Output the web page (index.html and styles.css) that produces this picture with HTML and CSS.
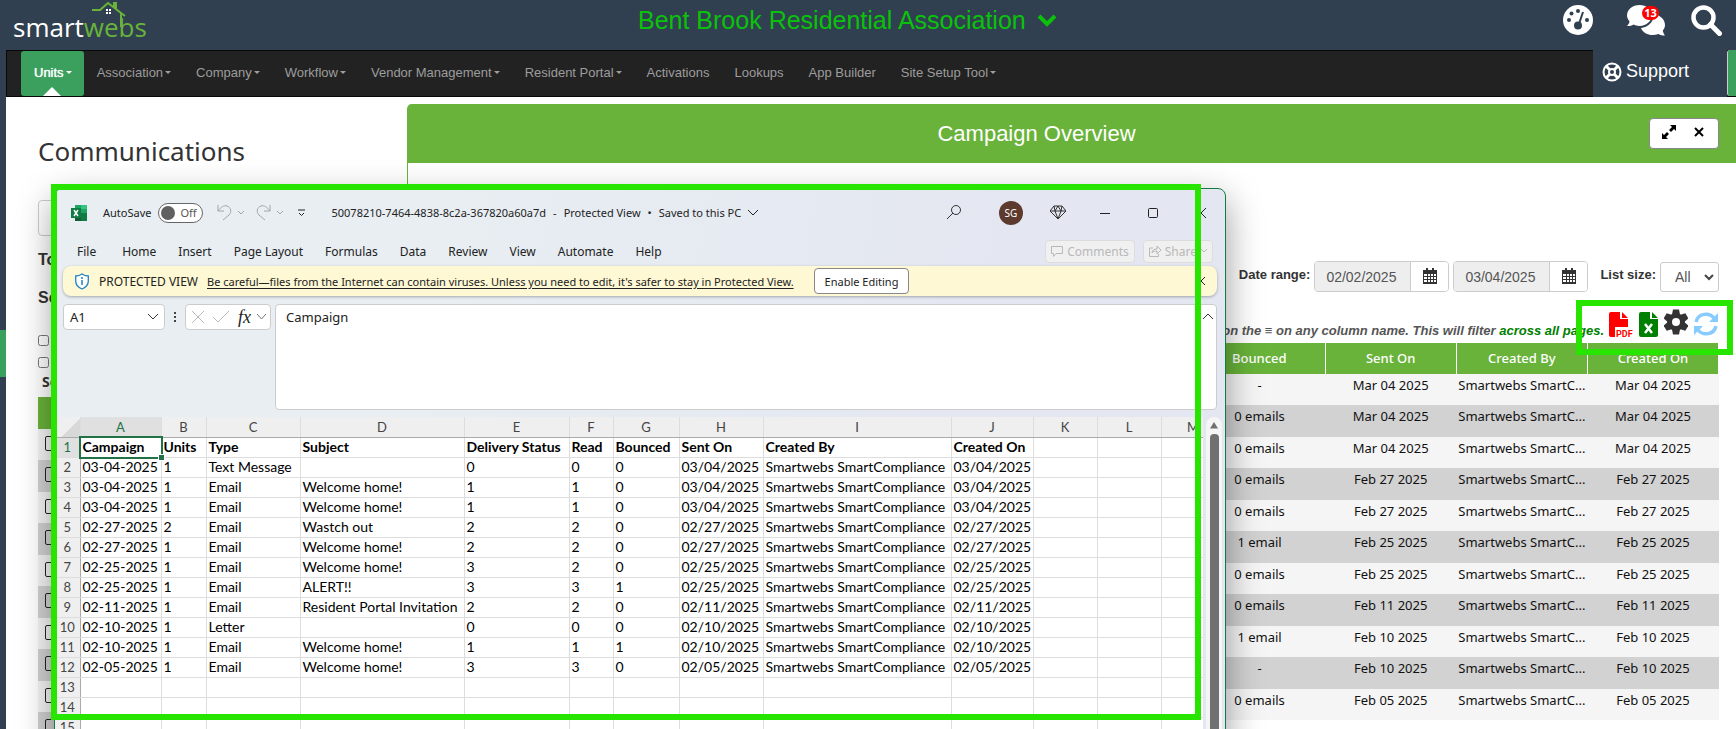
FILE: index.html
```html
<!DOCTYPE html>
<html lang="en">
<head>
  <meta charset="UTF-8">
  <meta name="viewport" content="width=device-width, initial-scale=1.0">
  <title>Communications - Smartwebs</title>
  <link rel="stylesheet" href="styles.css">
</head>
<body>
  <header class="topbar">
    <a href="#" class="logo">smart<span>webs</span>
      <svg class="logo-roof" width="36" height="28" viewBox="0 0 36 28"><path d="M0 9h8l8-7 17 13M29 12v14" fill="none" stroke="#69b33a" stroke-width="2"/><path d="M21 1h4v8l-4-3z" fill="#69b33a"/><path d="M14 8h2v2h-2zM17 8h2v2h-2zM14 11h2v2h-2zM17 11h2v2h-2z" fill="#fff"/></svg>
    </a>
    <button class="assoc">Bent Brook Residential Association
      <svg width="20" height="14" viewBox="0 0 20 14"><path d="M2 2l8 8 8-8" fill="none" stroke="#0bc20b" stroke-width="4"/></svg>
    </button>
    <div class="top-icons">
      <a href="#" aria-label="Dashboard"><svg width="30" height="30" viewBox="0 0 30 30"><circle cx="15" cy="15" r="15" fill="#fff"/><g fill="#304050"><circle cx="15" cy="6" r="2"/><circle cx="8.500" cy="8.500" r="2"/><circle cx="6" cy="15" r="2"/><circle cx="24" cy="15" r="2"/><circle cx="15" cy="20.500" r="4"/></g><path d="M16 19l4-12" stroke="#304050" stroke-width="2"/></svg></a>
      <a href="#" class="chat" aria-label="Messages"><svg width="38" height="31" viewBox="0 0 38 31"><path d="M12.500 0C19.500 0 25 4.400 25 10s-5.500 11-12.500 11c-2.500 0-4.500-.6-6-1.400C4.500 21 2 21.200 0 21c1.500-1.500 2.300-3 2.500-4.700C1 14.500 0 12.500 0 10.500 0 4.500 5.500 0 12.500 0z" fill="#fff"/><path d="M26.500 9C33 10 38 14.500 38 20c0 2-.8 4-2.200 5.400.3 2 1.200 3.600 2.200 5.100-2.500 0-4.600-.4-6.500-1.500-7 2.500-15 .5-17.500-6C21 22 27 17.500 26.500 9z" fill="#fff"/></svg><span class="badge">13</span></a>
      <a href="#" aria-label="Search"><svg width="31" height="31" viewBox="0 0 31 31"><circle cx="12.500" cy="12.500" r="10" fill="none" stroke="#fff" stroke-width="4.500"/><path d="M19.500 19.500l9 9" stroke="#fff" stroke-width="5" stroke-linecap="round"/></svg></a>
    </div>
  </header>

  <div class="shell">
    <div class="rail"><div class="rail-mark"></div></div>
    <div class="page">
      <nav class="navbar">
        <a href="#" class="active caret">Units</a>
        <a href="#" class="caret">Association</a>
        <a href="#" class="caret">Company</a>
        <a href="#" class="caret">Workflow</a>
        <a href="#" class="caret">Vendor Management</a>
        <a href="#" class="caret">Resident Portal</a>
        <a href="#">Activations</a>
        <a href="#">Lookups</a>
        <a href="#">App Builder</a>
        <a href="#" class="caret">Site Setup Tool</a>
        <a href="#" class="support"><svg width="20" height="20" viewBox="0 0 20 20" fill="none" stroke="#fff"><circle cx="10" cy="10" r="8.500" stroke-width="2"/><circle cx="10" cy="10" r="3" stroke-width="2"/><path d="M4 4l3.500 3.500M16 4l-3.500 3.500M4 16l3.500-3.500M16 16l-3.500-3.500" stroke-width="3"/></svg>Support</a>
        <span class="nav-end"></span>
      </nav>

      <div class="columns">
        <aside class="side">
          <h1>Communications</h1>
          <input type="text" class="side-search" aria-label="Search communications">
          <h2>To</h2>
          <h2>Se</h2>
          <input type="checkbox" class="tick" aria-label="First option">
          <input type="checkbox" class="tick" aria-label="Second option">
          <h3>Se</h3>
          <div class="side-list">
            <div class="side-head"></div>
            <div class="side-row"><input type="checkbox" aria-label="Row 1"></div>
            <div class="side-row"><input type="checkbox" aria-label="Row 2"></div>
            <div class="side-row"><input type="checkbox" aria-label="Row 3"></div>
            <div class="side-row"><input type="checkbox" aria-label="Row 4"></div>
            <div class="side-row"><input type="checkbox" aria-label="Row 5"></div>
            <div class="side-row"><input type="checkbox" aria-label="Row 6"></div>
            <div class="side-row"><input type="checkbox" aria-label="Row 7"></div>
            <div class="side-row"><input type="checkbox" aria-label="Row 8"></div>
            <div class="side-row"><input type="checkbox" aria-label="Row 9"></div>
            <div class="side-row"><input type="checkbox" aria-label="Row 10"></div>
          </div>
        </aside>

        <main class="panel">
          <div class="panel-head">
            <h2>Campaign Overview</h2>
            <div class="panel-tools">
              <button aria-label="Expand"><svg width="14" height="14" viewBox="0 0 14 14"><path d="M8 0h6v6l-2-2-3 3-2-2 3-3zM6 14H0V8l2 2 3-3 2 2-3 3z"/></svg></button>
              <button aria-label="Close"><svg width="10" height="10" viewBox="0 0 10 10"><path d="M1 1l8 8M9 1l-8 8" stroke="#000" stroke-width="2"/></svg></button>
            </div>
          </div>

          <div class="filters">
            <label for="from">Date range:</label>
            <div class="date"><input id="from" type="text" value="02/02/2025"><button aria-label="Pick start date"><svg width="14" height="16" viewBox="0 0 14 16"><path d="M0 2h14v14H0z" fill="#333"/><path d="M3 0h2v4H3zM9 0h2v4H9z" fill="#333"/><path d="M1 6h3v2H1zM5 6h2v2H5zM8 6h2v2H8zM11 6h2v2h-2zM1 9h3v2H1zM5 9h2v2H5zM8 9h2v2H8zM11 9h2v2h-2zM1 12h3v2H1zM5 12h2v2H5zM8 12h2v2H8zM11 12h2v2h-2z" fill="#fff"/></svg></button></div>
            <div class="date"><input type="text" value="03/04/2025" aria-label="End date"><button aria-label="Pick end date"><svg width="14" height="16" viewBox="0 0 14 16"><path d="M0 2h14v14H0z" fill="#333"/><path d="M3 0h2v4H3zM9 0h2v4H9z" fill="#333"/><path d="M1 6h3v2H1zM5 6h2v2H5zM8 6h2v2H8zM11 6h2v2h-2zM1 9h3v2H1zM5 9h2v2H5zM8 9h2v2H8zM11 9h2v2h-2zM1 12h3v2H1zM5 12h2v2H5zM8 12h2v2H8zM11 12h2v2h-2z" fill="#fff"/></svg></button></div>
            <label for="size" class="size-label">List size:</label>
            <div class="select"><select id="size"><option>All</option></select><svg width="10" height="7" viewBox="0 0 10 7"><path d="M1 1l4 4 4-4" fill="none" stroke="#444" stroke-width="2"/></svg></div>
          </div>

          <div class="hint">
            <p>k on the ≡ on any column name. This will filter <b>across all pages.</b></p>
            <div class="exports">
              <a href="#" aria-label="Export PDF"><svg width="24" height="26" viewBox="0 0 24 26"><path d="M2 0h9v7h8v8H6v10H2a2 2 0 0 1-2-2V2a2 2 0 0 1 2-2z" fill="#f00"/><path d="M13 0l6 6h-6z" fill="#f00"/><text x="7" y="25" font-size="9" font-weight="bold" font-family="Roboto, sans-serif" fill="#f00">PDF</text></svg></a>
              <a href="#" aria-label="Export Excel"><svg width="19" height="26" viewBox="0 0 19 26"><path d="M2 0h9v7h8v16a2 2 0 0 1-2 2H2a2 2 0 0 1-2-2V2a2 2 0 0 1 2-2zM13 0l6 6h-6z" fill="#008000"/><path d="M6 12l7 9M13 12l-7 9" stroke="#fff" stroke-width="2.500"/></svg></a>
              <a href="#" class="gear" aria-label="Settings"><svg width="24" height="26" viewBox="-12 -13 24 26"><g fill="#333"><circle r="9"/><path id="t" d="M-3-12.500h6l1 5h-8z"/><use href="#t" transform="rotate(60)"/><use href="#t" transform="rotate(120)"/><use href="#t" transform="rotate(180)"/><use href="#t" transform="rotate(240)"/><use href="#t" transform="rotate(300)"/></g><circle r="4" fill="#fff"/></svg></a>
              <a href="#" aria-label="Refresh"><svg width="24" height="24" viewBox="0 0 24 24"><path d="M2 10C4 1 15 0 20 6M22 14C20 23 9 24 4 18" fill="none" stroke="#8cf" stroke-width="3.500"/><path d="M24 1v9h-9zM0 23v-9h9z" fill="#8cf"/></svg></a>
            </div>
          </div>

          <table class="campaigns">
            <thead><tr><th>Bounced</th><th>Sent On</th><th>Created By</th><th>Created On</th></tr></thead>
            <tbody>
              <tr><td>-</td><td>Mar 04 2025</td><td>Smartwebs SmartC...</td><td>Mar 04 2025</td></tr>
              <tr><td>0 emails</td><td>Mar 04 2025</td><td>Smartwebs SmartC...</td><td>Mar 04 2025</td></tr>
              <tr><td>0 emails</td><td>Mar 04 2025</td><td>Smartwebs SmartC...</td><td>Mar 04 2025</td></tr>
              <tr><td>0 emails</td><td>Feb 27 2025</td><td>Smartwebs SmartC...</td><td>Feb 27 2025</td></tr>
              <tr><td>0 emails</td><td>Feb 27 2025</td><td>Smartwebs SmartC...</td><td>Feb 27 2025</td></tr>
              <tr><td>1 email</td><td>Feb 25 2025</td><td>Smartwebs SmartC...</td><td>Feb 25 2025</td></tr>
              <tr><td>0 emails</td><td>Feb 25 2025</td><td>Smartwebs SmartC...</td><td>Feb 25 2025</td></tr>
              <tr><td>0 emails</td><td>Feb 11 2025</td><td>Smartwebs SmartC...</td><td>Feb 11 2025</td></tr>
              <tr><td>1 email</td><td>Feb 10 2025</td><td>Smartwebs SmartC...</td><td>Feb 10 2025</td></tr>
              <tr><td>-</td><td>Feb 10 2025</td><td>Smartwebs SmartC...</td><td>Feb 10 2025</td></tr>
              <tr><td>0 emails</td><td>Feb 05 2025</td><td>Smartwebs SmartC...</td><td>Feb 05 2025</td></tr>
            </tbody>
          </table>
        </main>
      </div>
    </div>
  </div>

  <!-- spreadsheet window -->
  <section class="excel">
    <div class="titlebar">
      <svg width="16" height="16" viewBox="0 0 16 16"><path d="M4 0h6v8H4z" fill="#21a366"/><path d="M10 0h6v4h-6z" fill="#33c481"/><path d="M10 4h6v4h-6z" fill="#21a366"/><path d="M4 8h6v8H4z" fill="#185c37"/><path d="M10 8h6v8h-6z" fill="#107c41"/><path d="M0 3h10v10H0z" fill="#107c41"/><path d="M3 5l4 6M7 5l-4 6" stroke="#fff" stroke-width="1.500"/></svg>
      <span class="autosave">AutoSave</span>
      <button class="toggle"><i></i>Off</button>
      <div class="undo">
        <svg width="15" height="17" viewBox="0 0 15 17"><path d="M1 1v6h6M1 7C4 3 7 1 10 2c4 1 5 6 2 9l-6 5" fill="none" stroke="#a3a6aa"/></svg>
        <svg width="6" height="4" viewBox="0 0 6 4"><path d="M0 0l3 3 3-3" fill="none" stroke="#a3a6aa"/></svg>
      </div>
      <div class="undo">
        <svg width="15" height="17" viewBox="0 0 15 17"><path d="M14 1v6H8M14 7C11 3 8 1 5 2 1 3 0 8 3 11l6 5" fill="none" stroke="#a3a6aa"/></svg>
        <svg width="6" height="4" viewBox="0 0 6 4"><path d="M0 0l3 3 3-3" fill="none" stroke="#a3a6aa"/></svg>
      </div>
      <svg class="customize" width="7" height="8" viewBox="0 0 7 8"><path d="M0 1h7M1 4l2.500 2.500L6 4" fill="none" stroke="#222"/></svg>
      <div class="doc-title"><span>50078210-7464-4838-8c2a-367820a60a7d</span><span>-</span><span>Protected View</span><span>•</span><span>Saved to this PC</span>
        <svg width="10" height="6" viewBox="0 0 10 6"><path d="M0 0l5 5 5-5" fill="none" stroke="#222"/></svg></div>
      <div class="window-tools">
        <svg width="14" height="15" viewBox="0 0 14 15"><circle cx="9" cy="5" r="4.500" fill="none" stroke="#333"/><path d="M6 8l-6 6" stroke="#333"/></svg>
        <span class="avatar">SG</span>
        <svg class="gem" width="16" height="15" viewBox="0 0 16 15"><path d="M4 1h8l4 5-8 8-8-8zM0 6h16M4 1l1 5 3 8 3-8 1-5M5 6l3-5 3 5" fill="none" stroke="#333"/></svg>
        <svg class="min" width="10" height="10" viewBox="0 0 10 10"><path d="M0 5.500h10" stroke="#222"/></svg>
        <svg class="max" width="10" height="10" viewBox="0 0 10 10"><rect x=".5" y=".5" width="9" height="9" rx="1" fill="none" stroke="#222"/></svg>
        <svg width="10" height="10" viewBox="0 0 10 10"><path d="M0 0l10 10M10 0L0 10" stroke="#222"/></svg>
      </div>
    </div>

    <div class="ribbon">
      <button class="file">File</button><button>Home</button><button>Insert</button><button>Page Layout</button><button>Formulas</button><button>Data</button><button>Review</button><button>View</button><button>Automate</button><button>Help</button>
      <div class="share">
        <button disabled><svg width="12" height="11" viewBox="0 0 12 11"><path d="M.5.500h11v7H5l-2.500 3v-3h-2z" fill="none" stroke="#b8b8b8"/></svg>Comments</button>
        <button disabled><svg width="12" height="12" viewBox="0 0 12 12"><path d="M4 3H.5v8.500h9V9M3 8c0-3 2-4 5-4V1l4 4-4 4V6C6 6 4 6 3 8z" fill="none" stroke="#b8b8b8"/></svg>Share <svg width="6" height="4" viewBox="0 0 6 4"><path d="M0 0l3 3 3-3" fill="none" stroke="#b8b8b8"/></svg></button>
      </div>
    </div>

    <div class="protected">
      <svg width="14" height="17" viewBox="0 0 14 17"><path d="M7 1c2 1.500 4 2 6.300 2v5c0 4-2.500 6.500-6.300 8C3.200 14.500.7 12 .7 8V3C3 3 5 2.500 7 1z" fill="#fff" stroke="#1f83c4" stroke-width="1.300"/><path d="M7 7v5M7 4v2" stroke="#1f83c4" stroke-width="1.500"/></svg>
      <span class="protected-label">PROTECTED VIEW</span>
      <a href="#">Be careful—files from the Internet can contain viruses. Unless you need to edit, it's safer to stay in Protected View.</a>
      <button class="enable">Enable Editing</button>
      <svg class="close" width="8" height="8" viewBox="0 0 8 8"><path d="M0 0l8 8M8 0L0 8" stroke="#222"/></svg>
    </div>

    <div class="formula">
      <div class="box name-box">A1<svg width="10" height="6" viewBox="0 0 10 6"><path d="M0 0l5 5 5-5" fill="none" stroke="#333"/></svg></div>
      <svg class="dots" width="3" height="11" viewBox="0 0 3 11"><path d="M0 0h2v2H0zM0 4h2v2H0zM0 8h2v2H0z" fill="#444"/></svg>
      <div class="box fx-box">
        <svg width="12" height="12" viewBox="0 0 12 12"><path d="M0 0l12 12M12 0L0 12" stroke="#bbb"/></svg>
        <svg width="16" height="12" viewBox="0 0 16 12"><path d="M0 6l5 5L16 0" fill="none" stroke="#bbb"/></svg>
        <i>fx</i>
        <svg width="9" height="6" viewBox="0 0 9 6"><path d="M0 0l4.500 5L9 0" fill="none" stroke="#777"/></svg>
      </div>
      <div class="box value-box">Campaign<svg width="10" height="6" viewBox="0 0 10 6"><path d="M0 5l5-5 5 5" fill="none" stroke="#333"/></svg></div>
    </div>

    <div class="sheet-area">
      <div class="sheet-wrap">
        <table class="sheet">
          <colgroup><col class="w-n"><col class="w-a"><col class="w-b"><col class="w-c"><col class="w-d"><col class="w-e"><col class="w-f"><col class="w-g"><col class="w-h"><col class="w-i"><col class="w-j"><col class="w-k"><col class="w-k"><col class="w-k"></colgroup>
          <thead><tr><th class="corner"></th><th class="on">A</th><th>B</th><th>C</th><th>D</th><th>E</th><th>F</th><th>G</th><th>H</th><th>I</th><th>J</th><th>K</th><th>L</th><th>M</th></tr></thead>
          <tbody>
            <tr class="bold"><th class="on">1</th><td class="selected">Campaign</td><td>Units</td><td>Type</td><td>Subject</td><td>Delivery Status</td><td>Read</td><td>Bounced</td><td>Sent On</td><td>Created By</td><td>Created On</td><td></td><td></td><td></td></tr>
            <tr><th>2</th><td>03-04-2025</td><td>1</td><td>Text Message</td><td></td><td>0</td><td>0</td><td>0</td><td>03/04/2025</td><td>Smartwebs SmartCompliance</td><td>03/04/2025</td><td></td><td></td><td></td></tr>
            <tr><th>3</th><td>03-04-2025</td><td>1</td><td>Email</td><td>Welcome home!</td><td>1</td><td>1</td><td>0</td><td>03/04/2025</td><td>Smartwebs SmartCompliance</td><td>03/04/2025</td><td></td><td></td><td></td></tr>
            <tr><th>4</th><td>03-04-2025</td><td>1</td><td>Email</td><td>Welcome home!</td><td>1</td><td>1</td><td>0</td><td>03/04/2025</td><td>Smartwebs SmartCompliance</td><td>03/04/2025</td><td></td><td></td><td></td></tr>
            <tr><th>5</th><td>02-27-2025</td><td>2</td><td>Email</td><td>Wastch out</td><td>2</td><td>2</td><td>0</td><td>02/27/2025</td><td>Smartwebs SmartCompliance</td><td>02/27/2025</td><td></td><td></td><td></td></tr>
            <tr><th>6</th><td>02-27-2025</td><td>1</td><td>Email</td><td>Welcome home!</td><td>2</td><td>2</td><td>0</td><td>02/27/2025</td><td>Smartwebs SmartCompliance</td><td>02/27/2025</td><td></td><td></td><td></td></tr>
            <tr><th>7</th><td>02-25-2025</td><td>1</td><td>Email</td><td>Welcome home!</td><td>3</td><td>2</td><td>0</td><td>02/25/2025</td><td>Smartwebs SmartCompliance</td><td>02/25/2025</td><td></td><td></td><td></td></tr>
            <tr><th>8</th><td>02-25-2025</td><td>1</td><td>Email</td><td>ALERT!!</td><td>3</td><td>3</td><td>1</td><td>02/25/2025</td><td>Smartwebs SmartCompliance</td><td>02/25/2025</td><td></td><td></td><td></td></tr>
            <tr><th>9</th><td>02-11-2025</td><td>1</td><td>Email</td><td>Resident Portal Invitation</td><td>2</td><td>2</td><td>0</td><td>02/11/2025</td><td>Smartwebs SmartCompliance</td><td>02/11/2025</td><td></td><td></td><td></td></tr>
            <tr><th>10</th><td>02-10-2025</td><td>1</td><td>Letter</td><td></td><td>0</td><td>0</td><td>0</td><td>02/10/2025</td><td>Smartwebs SmartCompliance</td><td>02/10/2025</td><td></td><td></td><td></td></tr>
            <tr><th>11</th><td>02-10-2025</td><td>1</td><td>Email</td><td>Welcome home!</td><td>1</td><td>1</td><td>1</td><td>02/10/2025</td><td>Smartwebs SmartCompliance</td><td>02/10/2025</td><td></td><td></td><td></td></tr>
            <tr><th>12</th><td>02-05-2025</td><td>1</td><td>Email</td><td>Welcome home!</td><td>3</td><td>3</td><td>0</td><td>02/05/2025</td><td>Smartwebs SmartCompliance</td><td>02/05/2025</td><td></td><td></td><td></td></tr>
            <tr><th>13</th><td></td><td></td><td></td><td></td><td></td><td></td><td></td><td></td><td></td><td></td><td></td><td></td><td></td></tr>
            <tr><th>14</th><td></td><td></td><td></td><td></td><td></td><td></td><td></td><td></td><td></td><td></td><td></td><td></td><td></td></tr>
            <tr><th>15</th><td></td><td></td><td></td><td></td><td></td><td></td><td></td><td></td><td></td><td></td><td></td><td></td><td></td></tr>
          </tbody>
        </table>
      </div>
      <div class="scrollbar"><svg width="8" height="7" viewBox="0 0 8 7"><path d="M4 0l4 6.500H0z" fill="#707070"/></svg><div class="thumb"></div></div>
    </div>
  </section>

  <div class="mark mark-window"></div>
  <div class="mark mark-exports"></div>
</body>
</html>
```

FILE: styles.css
```css
* {
  box-sizing: border-box;
}
body {
  margin: 0;
  height: 100vh;
  overflow: hidden;
  position: relative;
  display: flex;
  flex-direction: column;
  background: #fff;
  color: #333;
  font-family: "Liberation Sans", Arial, sans-serif;
  font-size: 13px;
}
svg {
  display: block;
  flex: none;
}
button {
  font-family: inherit;
  cursor: pointer;
}
a {
  text-decoration: none;
}

/* top bar */
.topbar {
  height: 50px;
  flex: none;
  display: flex;
  background: #304050;
  padding: 0 14px 0 13px;
}
.logo {
  position: relative;
  width: 289px;
  padding-top: 10px;
  color: #fff;
  font: 26px/34px "Open Sans", sans-serif;
}
.logo span {
  color: #69b33a;
}
.logo-roof {
  position: absolute;
  left: 79px;
  top: 1px;
}
.assoc {
  display: flex;
  align-items: center;
  gap: 11px;
  height: 41px;
  margin: 0 auto 0 336px;
  padding: 0;
  border: none;
  background: none;
  color: #0bc20b;
  font-size: 25px;
}
.top-icons {
  display: flex;
  gap: 26px;
  padding-top: 5px;
}
.chat {
  position: relative;
  margin-left: 8px;
}
.badge {
  position: absolute;
  left: 15px;
  top: 1px;
  background: #f00;
  color: #fff;
  border-radius: 7px;
  width: 17px;
  font: bold 11px/14px "Noto Sans", sans-serif;
  text-align: center;
}

/* navigation */
.shell {
  flex: 1;
  display: flex;
  min-height: 0;
}
.rail {
  width: 6px;
  background: #304050;
  padding-top: 280px;
}
.rail-mark {
  height: 47px;
  background: #3ba05d;
}
.page {
  flex: 1;
  min-width: 0;
}
.navbar {
  display: flex;
  height: 47px;
  background: #222;
  border: 1px solid #080808;
  border-right: none;
  padding-left: 14px;
}
.navbar a {
  position: relative;
  padding: 0 12px 0 13px;
  color: #9d9d9d;
  line-height: 43px;
  white-space: nowrap;
}
.navbar .active {
  background: #3ba05d;
  color: #fff;
  border-radius: 3px;
  text-shadow: 0 0 1px #fff;
}
.active::before {
  content: "";
  position: absolute;
  bottom: 0;
  left: 22px;
  border: 9px solid transparent;
  border-top: none;
  border-bottom-color: #fff;
}
.caret::after {
  content: "";
  display: inline-block;
  margin-left: 2px;
  vertical-align: 3px;
  border: 3px solid transparent;
  border-top-color: currentColor;
  border-bottom: none;
}
.navbar .support {
  display: flex;
  align-items: center;
  gap: 4px;
  margin: -1px 0 -1px auto;
  width: 134px;
  padding: 0 0 4px 9px;
  background: #304050;
  color: #fff;
  font-size: 18px;
}
.nav-end {
  width: 9px;
  margin: -1px 0 0;
  background: #3ba05d;
  border-left: 1px solid #ccc;
  border-radius: 3px 0 0 3px;
}

/* left column */
.columns {
  display: flex;
}
.side {
  width: 401px;
  padding: 37px 0 0 32px;
}
.side h1 {
  margin: 0 0 31px;
  color: #333;
  font: 26px/35px "Noto Sans", sans-serif;
}
.side-search {
  display: block;
  width: 300px;
  height: 36px;
  margin-bottom: 12px;
  border: 1px solid #ccc;
  border-radius: 4px;
}
.side h2 {
  margin: 0 0 14px;
  font-size: 16px;
  line-height: 24px;
}
.side h2 + .tick {
  margin-top: 25px;
}
.tick {
  display: block;
  width: 11px;
  height: 11px;
  margin: 11px 0 0;
}
.side h3 {
  margin: 4px 0 5px;
  padding-left: 4px;
  font: bold 14px/20px "Noto Sans", sans-serif;
}
.side-head {
  height: 32px;
  background: #69b33a;
}
.side-row {
  height: 32px;
  padding: 7px 0 0 7px;
  background: #d2d2d2;
}
.side-row:nth-child(even) {
  height: 31px;
  background: #f5f5f5;
}
.side-row input {
  display: block;
  appearance: none;
  width: 15px;
  height: 15px;
  margin: 0;
  border: 1px solid #222;
  border-radius: 2px;
}

/* campaign panel */
.panel {
  flex: 1;
  margin-top: 7px;
  border-left: 1px solid #69b33a;
  border-top-left-radius: 5px;
}
.panel-head {
  display: flex;
  align-items: center;
  height: 59px;
  padding: 0 17px 0 16px;
  background: #69b33a;
  border-top-left-radius: 4px;
}
.panel-head h2 {
  flex: 1;
  margin: 0;
  color: #fff;
  font-size: 22px;
  font-weight: normal;
  text-align: center;
}
.panel-tools {
  display: flex;
  width: 70px;
  height: 31px;
  border: 1px solid #888;
  border-radius: 4px;
  background: #fff;
}
.panel-tools button {
  flex: 1;
  display: flex;
  align-items: center;
  justify-content: center;
  border: none;
  background: none;
  padding: 0 0 4px 4px;
}
.panel-tools button + button {
  padding: 0 4px 4px 0;
}
.filters {
  display: flex;
  justify-content: flex-end;
  align-items: center;
  gap: 4px;
  padding: 98px 17px 0 0;
}
.filters label {
  font-weight: bold;
  margin-bottom: 4px;
}
.filters .size-label {
  margin-left: 8px;
}
.date {
  display: flex;
  width: 135px;
  height: 31px;
  border: 1px solid #ccc;
  border-radius: 4px;
  overflow: hidden;
}
.date input {
  flex: 1;
  min-width: 0;
  border: none;
  border-right: 1px solid #ccc;
  background: #eee;
  color: #555;
  padding: 0 0 0 11px;
  font: 14px "Liberation Sans", Arial, sans-serif;
}
.date button {
  display: flex;
  align-items: center;
  width: 37px;
  border: none;
  background: #fff;
  padding: 0 0 2px 12px;
}
.select {
  position: relative;
  width: 59px;
}
.select select {
  appearance: none;
  width: 100%;
  height: 30px;
  padding-left: 14px;
  border: 1px solid #ccc;
  border-radius: 3px;
  background: #fff;
  color: #555;
  font: 14px "Liberation Sans", Arial, sans-serif;
}
.select svg {
  position: absolute;
  right: 5px;
  top: 12px;
}
.hint {
  display: flex;
  justify-content: flex-end;
  gap: 5px;
  padding: 18px 18px 0 0;
}
.hint p {
  margin: 0;
  padding-top: 13px;
  color: #555;
  font-size: 13px;
  font-style: italic;
  font-weight: bold;
  line-height: 16px;
}
.hint b {
  color: #008000;
}
.exports {
  display: flex;
  gap: 6px;
  height: 33px;
  padding-top: 2px;
}
.exports .gear {
  margin-top: -3px;
}
.campaigns {
  width: 525px;
  margin: 0 17px 0 auto;
  border-collapse: collapse;
  table-layout: fixed;
  color: #111;
  font: 13px/18px "Noto Sans", sans-serif;
  text-align: center;
}
.campaigns th {
  height: 31px;
  padding: 0 0 2px;
  background: #69b33a;
  border-right: 1px solid #fff;
  color: #fff;
  font-weight: 500;
}
.campaigns td {
  height: 32px;
  padding: 2px 0 0;
  background: #d2d2d2;
  vertical-align: top;
  white-space: nowrap;
}
.campaigns tbody tr:nth-child(odd) td {
  height: 31px;
  background: #f5f5f5;
}

/* spreadsheet window */
.excel {
  position: absolute;
  left: 54px;
  right: 510px;
  top: 188px;
  bottom: -20px;
  display: flex;
  flex-direction: column;
  border: 1px solid #107c41;
  border-radius: 8px;
  background: linear-gradient(100deg, #e8eef2 30%, #e4e7f1 75%);
  box-shadow: 0 12px 36px rgba(0, 0, 0, .4);
  color: #222;
  font-family: "Noto Sans", sans-serif;
  font-size: 12px;
  overflow: hidden;
}
.titlebar {
  display: flex;
  align-items: center;
  height: 47px;
  padding: 0 19px 0 16px;
  font-size: 11px;
}
.autosave {
  margin: 0 7px 0 16px;
}
.toggle {
  display: flex;
  align-items: center;
  gap: 5px;
  width: 45px;
  height: 20px;
  margin-right: 14px;
  padding: 0 0 0 2px;
  border: 1px solid #666;
  border-radius: 10px;
  background: #fff;
  color: #555;
  font-size: 11px;
}
.toggle i {
  width: 14px;
  height: 14px;
  border-radius: 50%;
  background: #616161;
}
.undo {
  display: flex;
  align-items: center;
  gap: 6px;
  margin-right: 12px;
}
.customize {
  margin-left: 3px;
}
.doc-title {
  display: flex;
  align-items: center;
  gap: 7px;
  margin-left: 26px;
}
.window-tools {
  display: flex;
  align-items: center;
  margin-left: auto;
}
.avatar {
  width: 24px;
  margin: 0 27px 0 38px;
  border-radius: 50%;
  background: #5c3a2e;
  color: #fff;
  font-size: 10px;
  line-height: 24px;
  text-align: center;
}
.min {
  margin: 0 38px 0 34px;
}
.max {
  margin-right: 38px;
}
.ribbon {
  display: flex;
  align-items: center;
  gap: 22px;
  height: 30px;
  padding: 0 12px 0 22px;
}
.ribbon button {
  padding: 0;
  border: none;
  background: none;
  color: #222;
  font-size: 12px;
}
.ribbon .file {
  margin-right: 4px;
}
.share {
  display: flex;
  gap: 8px;
  margin-left: auto;
}
.ribbon .share button {
  display: flex;
  align-items: center;
  gap: 4px;
  height: 23px;
  padding: 0 5px;
  border: 1px solid #dcdcdc;
  border-radius: 4px;
  background: #f0f0f0;
  color: #b8b8b8;
}
.protected {
  display: flex;
  align-items: center;
  height: 30px;
  margin: 0 8px;
  padding: 0 12px;
  border-radius: 8px;
  background: #fef8d4;
  box-shadow: 0 1px 3px rgba(0, 0, 0, .3);
}
.protected-label {
  margin: 0 9px 0 10px;
}
.protected a {
  color: #222;
  font-size: 11px;
  text-decoration: underline;
  text-underline-offset: 2px;
}
.enable {
  height: 26px;
  margin-left: 20px;
  padding: 0 10px;
  border: 1px solid #888;
  border-radius: 4px;
  background: #fff;
  color: #222;
  font-size: 11px;
}
.protected .close {
  margin-left: auto;
}
.formula {
  display: flex;
  align-items: flex-start;
  padding: 8px 8px 7px;
  font-size: 13px;
}
.box {
  display: flex;
  align-items: center;
  height: 26px;
  border: 1px solid #ccc;
  border-radius: 4px;
  background: #fff;
}
.name-box {
  justify-content: space-between;
  width: 102px;
  padding: 0 6px;
}
.dots {
  margin: 8px 8px 0 9px;
}
.fx-box {
  gap: 9px;
  width: 86px;
  padding: 0 2px 0 6px;
  margin-right: 4px;
}
.fx-box i {
  font: italic 18px/20px "Liberation Serif", serif;
}
.fx-box i + svg {
  margin-left: -3px;
}
.value-box {
  flex: 1;
  align-items: flex-start;
  justify-content: space-between;
  height: 106px;
  padding: 3px 3px 0 10px;
}
.value-box svg {
  margin-top: 6px;
}
.sheet-area {
  display: flex;
  flex: 1;
  min-height: 0;
  padding-right: 3px;
}
.sheet-wrap {
  flex: 1;
  min-width: 0;
  overflow: hidden;
}
.sheet {
  width: 1170px;
  border-collapse: collapse;
  table-layout: fixed;
  background: #fff;
  color: #000;
  font: 14px/18px Lato, sans-serif;
}
.w-n { width: 25px; }
.w-a { width: 81px; }
.w-b { width: 45px; }
.w-c { width: 94px; }
.w-d { width: 164px; }
.w-e { width: 105px; }
.w-f { width: 44px; }
.w-g { width: 66px; }
.w-h { width: 84px; }
.w-i { width: 188px; }
.w-j { width: 82px; }
.w-k { width: 64px; }
.sheet th {
  height: 20px;
  padding: 0;
  border-right: 1px solid #ddd;
  background: #efefef;
  color: #444;
  font-size: 13px;
  font-weight: normal;
}
.sheet thead th {
  border-bottom: 1px solid #aaa;
}
.sheet tbody th {
  border-right-color: #aaa;
  border-bottom: 1px solid #ddd;
}
.sheet .on {
  background: #e0e0e0;
  color: #217346;
}
.sheet td {
  position: relative;
  height: 20px;
  padding: 0 0 0 2px;
  border: 1px solid #ddd;
  white-space: nowrap;
}
.sheet .corner {
  background: linear-gradient(135deg, #efefef 60%, #d8d8d8 60%);
}
.bold {
  font-weight: bold;
}
.selected::before {
  content: "";
  position: absolute;
  left: -2px;
  top: -2px;
  right: -2px;
  bottom: -2px;
  border: 2px solid #217346;
}
.selected::after {
  content: "";
  position: absolute;
  right: -3px;
  bottom: -3px;
  width: 5px;
  height: 5px;
  background: #217346;
  outline: 1px solid #fff;
}
.scrollbar {
  display: flex;
  flex-direction: column;
  align-items: center;
  gap: 5px;
  width: 16px;
  margin-left: 3px;
  padding-top: 5px;
  border-radius: 8px;
  background: #f5f5f5;
}
.thumb {
  flex: 1;
  width: 9px;
  border-radius: 4px;
  background: #707070;
}

/* highlight frames */
.mark {
  position: absolute;
  border: 6px solid #28e500;
}
.mark-window {
  left: 51px;
  right: 535px;
  top: 184px;
  height: 536px;
}
.mark-exports {
  right: 3px;
  top: 300px;
  width: 157px;
  height: 55px;
}
```
